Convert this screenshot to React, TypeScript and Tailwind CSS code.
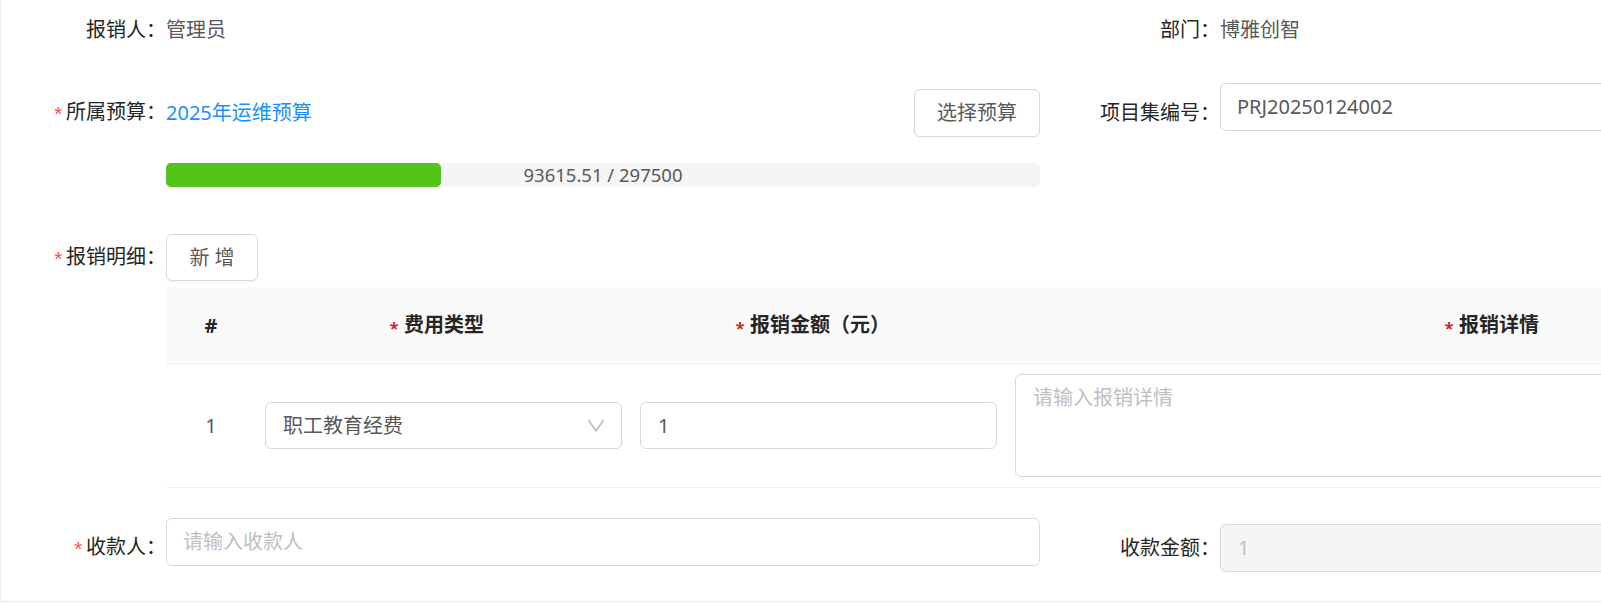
import type { ReactNode } from 'react';

const used = 93615.51;
const total = 297500;

const Req = () => (
  <span className="mr-[3px] inline-block w-[11px] translate-y-[3px] text-center font-['Liberation_Mono',monospace] text-[21px] text-[#ff4d4f]">
    *
  </span>
);

const HeadReq = () => (
  <span className="mr-[5px] inline-block w-[10px] translate-y-[2px] text-center text-[16px] text-[#c8251d]">*</span>
);

interface LabelProps {
  text: string;
  required?: boolean;
  width: string;
  className?: string;
}

const Label = ({ text, required, width, className = '' }: LabelProps) => (
  <div className={`${width} ${className} shrink-0 text-right leading-[30px] text-[#262626]`}>
    {required && <Req />}
    {text}：
  </div>
);

const Box = ({ children, className = '' }: { children: ReactNode; className?: string }) => (
  <div className={`flex items-center rounded-[6px] border border-[#d9d9d9] ${className}`}>{children}</div>
);

const DownIcon = () => (
  <svg viewBox="64 64 896 896" width="20" height="20" fill="#bfbfbf">
    <path d="M884 256h-75c-5.1 0-9.9 2.5-12.9 6.6L512 654.2 227.9 262.6c-3-4.1-7.8-6.6-12.9-6.6h-75c-6.5 0-10.3 7.4-6.5 12.7l352.6 486.1c12.8 17.6 39 17.6 51.7 0l352.6-486.1c3.9-5.3.1-12.7-6.4-12.7z" />
  </svg>
);

export default function App() {
  const pct = (used / total) * 100;

  return (
    <div className="h-[603px] w-[1601px] overflow-hidden bg-white font-['Noto_Sans','Noto_Sans_CJK_SC',sans-serif] text-[20px]">
      <div className="flex h-[602px] w-[2100px] flex-col border-b border-l border-[#ebebeb]">
        {/* 报销人 / 部门 */}
        <div className="flex h-[60px] items-center">
          <div className="flex w-[1039px] items-center">
            <Label width="w-[165px]" text="报销人" />
            <span className="leading-[30px] text-[#595959]">管理员</span>
          </div>
          <div className="flex items-center">
            <Label width="w-[180px]" text="部门" />
            <span className="leading-[30px] text-[#595959]">博雅创智</span>
          </div>
        </div>

        {/* 所属预算 / 项目集编号 */}
        <div className="mt-[23px] flex items-start">
          <div className="flex w-[1039px] items-start pt-[6px]">
            <div className="flex h-[48px] items-center">
              <Label width="w-[165px]" text="所属预算" required />
            </div>
            <div className="flex w-[874px] flex-col">
              <div className="flex h-[48px] items-center justify-between">
                <span className="leading-[30px] text-[#1890ff]">2025年运维预算</span>
                <button className="h-[48px] rounded-[6px] border border-[#d9d9d9] bg-white px-[22px] leading-[30px] text-[#595959] shadow-[0_2px_0_rgba(0,0,0,0.02)]">
                  选择预算
                </button>
              </div>
              <div className="relative mt-[26px] h-[24px] rounded-[5px] bg-[#f5f5f5]">
                <div className="h-full rounded-[5px] bg-[#52c41a]" style={{ width: `${pct}%` }} />
                <div className="absolute inset-0 flex items-center justify-center text-[18.5px] text-[#595959]">
                  {used} / {total}
                </div>
              </div>
            </div>
          </div>
          <div className="flex items-start">
            <div className="mt-[6px] flex h-[48px] items-center">
              <Label width="w-[180px]" text="项目集编号" />
            </div>
            <Box className="h-[48px] w-[600px] pl-[16px]">
              <span className="leading-[30px] text-[#595959]">PRJ20250124002</span>
            </Box>
          </div>
        </div>

        {/* 报销明细 */}
        <div className="mt-[47px] flex items-start">
          <div className="flex h-[47px] items-center">
            <Label width="w-[165px]" text="报销明细" required />
          </div>
          <div className="flex flex-col">
            <button className="h-[47px] w-[92px] rounded-[6px] border border-[#d9d9d9] bg-white leading-[30px] text-[#595959] shadow-[0_2px_0_rgba(0,0,0,0.02)]">
              新 增
            </button>
            <div className="mt-[6px] w-[1808px]">
              <div className="flex h-[78px] items-center border-b border-[#f0f0f0] bg-[#fafafa] font-bold leading-[30px] text-[#262626]">
                <div className="w-[90px] text-center">#</div>
                <div className="w-[375px] pr-[14px] text-center">
                  <HeadReq />
                  费用类型
                </div>
                <div className="w-[375px] pr-[12px] text-center">
                  <HeadReq />
                  报销金额（元）
                </div>
                <div className="w-[968px] pl-[3px] text-center">
                  <HeadReq />
                  报销详情
                </div>
              </div>
              <div className="flex items-center border-b border-[#f0f0f0] pb-[10px] pt-[9px] leading-[30px]">
                <div className="w-[90px] text-center text-[#595959]">1</div>
                <div className="w-[375px] px-[9px]">
                  <Box className="h-[47px] justify-between pl-[17px] pr-[15px]">
                    <span className="text-[#595959]">职工教育经费</span>
                    <DownIcon />
                  </Box>
                </div>
                <div className="w-[375px] px-[9px]">
                  <Box className="h-[47px] pl-[17px]">
                    <span className="text-[#595959]">1</span>
                  </Box>
                </div>
                <div className="w-[968px] px-[9px]">
                  <div className="h-[103px] rounded-[6px] border border-[#d9d9d9] pl-[17px] pt-[8px] text-[#bfbfbf]">
                    请输入报销详情
                  </div>
                </div>
              </div>
            </div>
          </div>
        </div>

        {/* 收款人 / 收款金额 */}
        <div className="mt-[30px] flex items-start">
          <div className="flex w-[1039px] items-start">
            <Label width="w-[165px]" text="收款人" required className="pt-[14px]" />
            <Box className="h-[48px] w-[874px] pl-[16px]">
              <span className="leading-[30px] text-[#bfbfbf]">请输入收款人</span>
            </Box>
          </div>
          <div className="flex items-center pt-[6px]">
            <Label width="w-[180px]" text="收款金额" />
            <Box className="h-[48px] w-[600px] bg-[#f5f5f5] pl-[17px]">
              <span className="leading-[30px] text-[#bfbfbf]">1</span>
            </Box>
          </div>
        </div>
      </div>
    </div>
  );
}
